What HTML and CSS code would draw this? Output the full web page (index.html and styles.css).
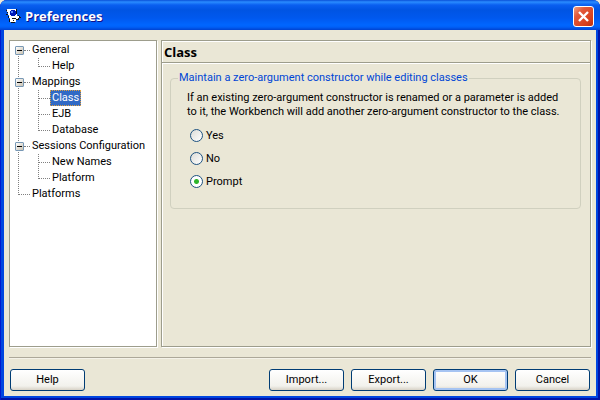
FILE: index.html
```html
<!DOCTYPE html>
<html lang="en">
<head>
    <meta charset="UTF-8">
    <meta name="viewport" content="width=device-width, initial-scale=1.0">
    <title>Preferences</title>
    <link rel="stylesheet" href="styles.css">
</head>
<body>
    <div class="window">
        <header class="titlebar">
            <svg class="app-icon" width="16" height="16" viewBox="0 0 16 16" shape-rendering="crispEdges">
                <path fill="#fff" d="M1 1h9v5h1v2h3v2h-2v1h-2v3H4v-4H3V7H2V4H1z"/>
                <path fill="#111" d="M0 2h1v1H0zM1 4h1v1H1zM0 6h2v1H0zM2 8h1v2H2zM10 1h1v5h-1zM3 11h1v3H3zM6 10h4v1H6zM10 11h2v1h-2zM12 7h1v1h-1zM12 10h1v2h-1zM13 8h1v2h-1zM14 9h1v1h-1zM5 14h4v1H5zM7 12h1v1H7z"/>
                <path fill="#0018b8" d="M5 2h4v1h1v4H9v1H5V7H4V3h1z"/>
                <path fill="#5c8cff" d="M5 3h2v2H5z"/>
            </svg>
            <h1>Preferences</h1>
            <button class="close" type="button" aria-label="Close">
                <svg width="19" height="19" viewBox="0 0 19 19">
                    <path d="M5 5l9 9M14 5l-9 9" stroke="#fff" stroke-width="2.4" fill="none"/>
                </svg>
            </button>
        </header>

        <main class="content">
            <div class="panels">
                <nav class="tree">
                    <ul class="root">
                        <li>
                            <div class="row"><button class="toggle" type="button" aria-label="Collapse General"></button><span class="dots"></span><a href="#">General</a></div>
                            <ul class="children">
                                <li><div class="row"><span class="dots"></span><a href="#">Help</a></div></li>
                            </ul>
                        </li>
                        <li>
                            <div class="row"><button class="toggle" type="button" aria-label="Collapse Mappings"></button><span class="dots"></span><a href="#">Mappings</a></div>
                            <ul class="children">
                                <li><div class="row"><span class="dots"></span><a class="selected" href="#">Class</a></div></li>
                                <li><div class="row"><span class="dots"></span><a href="#">EJB</a></div></li>
                                <li><div class="row"><span class="dots"></span><a href="#">Database</a></div></li>
                            </ul>
                        </li>
                        <li>
                            <div class="row"><button class="toggle" type="button" aria-label="Collapse Sessions Configuration"></button><span class="dots"></span><a href="#">Sessions Configuration</a></div>
                            <ul class="children">
                                <li><div class="row"><span class="dots"></span><a href="#">New Names</a></div></li>
                                <li><div class="row"><span class="dots"></span><a href="#">Platform</a></div></li>
                            </ul>
                        </li>
                        <li>
                            <div class="row leaf"><span class="dots"></span><a href="#">Platforms</a></div>
                        </li>
                    </ul>
                </nav>

                <section class="page">
                    <h2>Class</h2>
                    <fieldset>
                        <legend>Maintain a zero-argument constructor while editing classes</legend>
                        <p>If an existing zero-argument constructor is renamed or a parameter is added<br>
                        to it, the Workbench will add another zero-argument constructor to the class.</p>
                        <label><input type="radio" name="constructor" value="yes">Yes</label>
                        <label><input type="radio" name="constructor" value="no">No</label>
                        <label><input type="radio" name="constructor" value="prompt" checked>Prompt</label>
                    </fieldset>
                </section>
            </div>

            <footer class="buttons">
                <button class="btn help" type="button">Help</button>
                <button class="btn" type="button">Import...</button>
                <button class="btn" type="button">Export...</button>
                <button class="btn default" type="button">OK</button>
                <button class="btn" type="button">Cancel</button>
            </footer>
        </main>
    </div>
</body>
</html>
```

FILE: styles.css
```css
* {
    box-sizing: border-box;
}
body {
    margin: 0;
    background: #ece9d8;
    color: #000;
    font-family: Roboto, 'Liberation Sans', sans-serif;
    font-size: 11px;
    line-height: 14px;
}
button {
    font: inherit;
    color: inherit;
}
.window {
    display: flex;
    flex-direction: column;
    min-height: 100vh;
    padding: 0 4px 4px;
    background: #0046e0;
    border-radius: 7px 7px 0 0;
    box-shadow: inset 1px 0 #0019cf, inset -2px -2px #0014a8;
}

/* title bar */
.titlebar {
    display: flex;
    align-items: center;
    height: 30px;
    margin: 0 -4px;
    padding: 2px 6px 0;
    border-radius: 7px 7px 0 0;
    background: linear-gradient(#0a50d8 0, #2a8cff 2px, #0a5ff0 5px, #0054e3 10px, #0058ee 18px, #0066ff 25px, #0060f8 27px, #0042d0 30px);
}
.titlebar h1 {
    flex: 1;
    margin: 0 0 0 3px;
    color: #fff;
    font-family: 'Open Sans', 'Noto Sans', sans-serif;
    font-size: 13px;
    font-weight: bold;
    text-shadow: 1px 1px #0f1089;
}
.close {
    width: 21px;
    height: 21px;
    padding: 0;
    border: 1px solid #fff;
    border-radius: 3px;
    background: linear-gradient(135deg, #f0a080, #e2583a 30%, #d8401c 75%, #b83010);
}
.close svg {
    display: block;
}

.content {
    flex: 1;
    display: flex;
    flex-direction: column;
    padding: 10px 5px 5px;
    background: #eae7d6;
}
.panels {
    flex: 1;
    display: grid;
    grid-template-columns: 148px minmax(0, 1fr);
    gap: 4px;
}

/* tree */
.tree {
    padding: 1px 0;
    background: #fff;
    border: 1px solid #9d9d8c;
    box-shadow: 1px 1px #fff;
}
.tree ul {
    margin: 0;
    padding: 0;
    list-style: none;
}
.tree li {
    background: repeating-linear-gradient(#808080 0 1px, transparent 1px 2px) no-repeat 0 0 / 1px 100%;
}
.root > li {
    background-position: 8px 0;
}
.root > li:first-child {
    background-position: 8px 8px;
}
.root > li:last-child,
.children > li:last-child {
    background-size: 1px 9px;
}
.tree .children {
    padding-left: 28px;
}
.row {
    display: flex;
    align-items: center;
    height: 16px;
}
.root > li > .row {
    padding-left: 5px;
}
.root > li > .leaf {
    padding-left: 8px;
}
.dots {
    width: 6px;
    border-top: 1px dotted #808080;
}
.children .dots,
.leaf .dots {
    width: 12px;
}
.row a {
    padding: 0 1px;
    border: 1px solid transparent;
    color: #000;
    line-height: 14px;
    text-decoration: none;
    white-space: nowrap;
}
.row .selected {
    background: #316ac5;
    border: 1px dotted #e0a040;
    color: #fff;
}
.toggle {
    width: 9px;
    height: 9px;
    padding: 0;
    border: 1px solid #7898b5;
    border-radius: 1px;
    background: linear-gradient(#000, #000) no-repeat center / 5px 1px, linear-gradient(135deg, #fff, #c8c0b0);
}

/* preference page */
.page {
    border: 1px solid #9d9d8c;
    box-shadow: 1px 1px #fff, inset 1px 1px #fff;
}
.page h2 {
    margin: 0;
    padding: 3px 2px 2px;
    border-bottom: 1px solid #9d9d8c;
    box-shadow: 0 1px #fff;
    font-family: 'Open Sans', 'Noto Sans', sans-serif;
    font-size: 13px;
    line-height: 16px;
}
fieldset {
    min-width: 0;
    margin: 8px 9px 0 8px;
    padding: 6px 16px 15px;
    border: 1px solid #d0d0bf;
    border-radius: 4px;
}
legend {
    margin-left: -9px;
    padding: 0 1px;
    color: #0046d5;
}
fieldset p {
    margin: 0 0 5px;
    white-space: nowrap;
}
fieldset label {
    display: flex;
    align-items: center;
    gap: 3px;
    width: max-content;
    height: 23px;
    padding-left: 3px;
}
fieldset input {
    appearance: none;
    width: 13px;
    height: 13px;
    margin: 0;
    border: 1px solid #1d5281;
    border-radius: 50%;
    background: linear-gradient(135deg, #dcdcd7, #fff);
}
fieldset input:checked {
    background: radial-gradient(circle, #2fb52b 0 2px, #fff 3px);
}

/* button bar */
.buttons {
    display: flex;
    gap: 7px;
    margin-top: 10px;
    padding: 11px 1px 0;
    border-top: 1px solid #aca899;
    box-shadow: inset 0 1px #f4f2e8;
}
.btn {
    width: 75px;
    height: 22px;
    padding: 0;
    border: 1px solid #003c74;
    border-radius: 3px;
    background: linear-gradient(#fff, #f2f1ec 80%, #d8d2c6);
}
.help {
    margin-right: auto;
}
.default {
    box-shadow: inset 0 0 0 2px #a6c4f2;
}
```
